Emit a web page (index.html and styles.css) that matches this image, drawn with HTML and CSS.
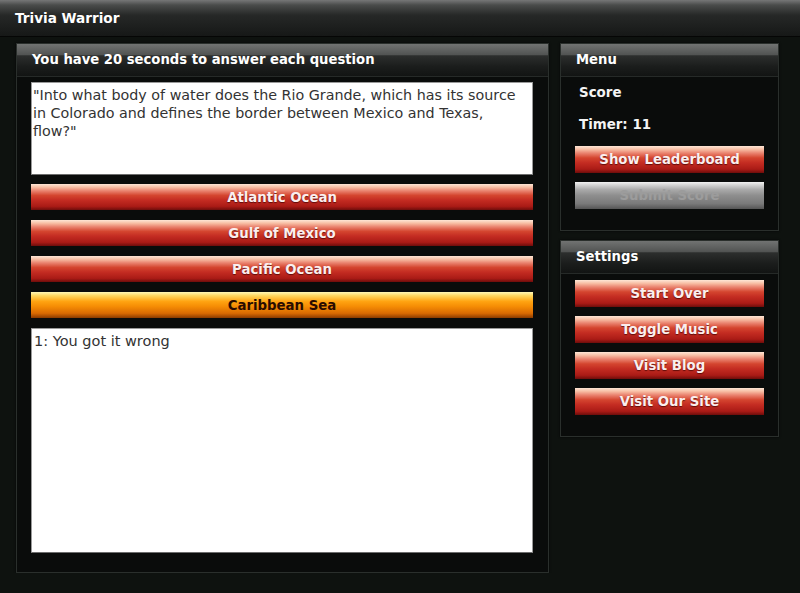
FILE: index.html
```html
<!DOCTYPE html>
<html lang="en">
<head>
  <meta charset="UTF-8">
  <meta name="viewport" content="width=device-width, initial-scale=1.0">
  <title>Trivia Warrior</title>
  <link rel="stylesheet" href="styles.css">
</head>
<body>
  <header class="topbar">Trivia Warrior</header>

  <main class="layout">
    <section class="panel game">
      <h2 class="panel-head">You have 20 seconds to answer each question</h2>
      <div class="panel-body game-body">
        <div class="question">"Into what body of water does the Rio Grande, which has its source in Colorado and defines the border between Mexico and Texas, flow?"</div>

        <div class="answers">
          <button class="btn btn-red answer">Atlantic Ocean</button>
          <button class="btn btn-red answer">Gulf of Mexico</button>
          <button class="btn btn-red answer">Pacific Ocean</button>
          <button class="btn btn-orange answer">Caribbean Sea</button>
        </div>

        <div class="log">1: You got it wrong</div>
      </div>
    </section>

    <aside class="sidebar">
      <section class="panel">
        <h2 class="panel-head">Menu</h2>
        <div class="panel-body side-body">
          <div class="stat">Score</div>
          <div class="stat">Timer: 11</div>
          <div class="btn-stack">
            <button class="btn btn-red">Show Leaderboard</button>
            <button class="btn btn-gray" disabled>Submit Score</button>
          </div>
        </div>
      </section>

      <section class="panel">
        <h2 class="panel-head">Settings</h2>
        <div class="panel-body side-body settings-body">
          <div class="btn-stack">
            <button class="btn btn-red">Start Over</button>
            <button class="btn btn-red">Toggle Music</button>
            <button class="btn btn-red">Visit Blog</button>
            <button class="btn btn-red">Visit Our Site</button>
          </div>
        </div>
      </section>
    </aside>
  </main>
</body>
</html>
```

FILE: styles.css
```css
body {
  margin: 0;
  padding: 0;
  background-color: #0e120f;
  font-family: "DejaVu Sans", Verdana, sans-serif;
  color: #fff;
}

/* top title bar */
.topbar {
  height: 36px;
  line-height: 36px;
  padding-left: 15px;
  font-size: 13.6px;
  font-weight: bold;
  border-bottom: 1px solid #050605;
  background: linear-gradient(#767777 0%, #4a4c4b 14%, #262827 42%, #161817 100%);
}

.layout {
  display: flex;
  align-items: flex-start;
  gap: 11px;
  padding: 6px 0 0 16px;
}

/* panels */
.panel {
  background-color: #0a0c0b;
  border: 1px solid #2a2f2c;
  box-shadow: 0 0 2px rgba(0, 0, 0, 0.8);
}

.panel-head {
  margin: 0;
  height: 33px;
  line-height: 32px;
  padding-left: 15px;
  font-size: 13.2px;
  font-weight: bold;
  color: #fff;
  box-sizing: border-box;
  border-bottom: 1px solid #262a28;
  background: linear-gradient(#717372 0%, #525453 33%, #2c2e2d 37%, #1b1d1c 70%, #121413 100%);
}

.game {
  width: 531px;
}

.game-body {
  padding: 5px 15px 19px 14px;
}

.question {
  height: 87px;
  padding: 3px 7px 1px 1px;
  background-color: #fff;
  border: 1px solid #9a9a9a;
  border-bottom-color: #6d6d6d;
  color: #333;
  font-size: 14.3px;
  line-height: 18px;
}

.answers {
  display: flex;
  flex-direction: column;
  gap: 10px;
  margin: 9px 0 10px;
}

.log {
  height: 219px;
  padding: 3px 2px 1px 2px;
  background-color: #fff;
  border: 1px solid #9a9a9a;
  border-bottom-color: #6d6d6d;
  color: #333;
  font-size: 14.5px;
  line-height: 18px;
}

/* buttons */
.btn {
  display: block;
  width: 100%;
  height: 26px;
  padding: 0;
  border: none;
  font-family: "DejaVu Sans", Verdana, sans-serif;
  font-size: 13.3px;
  font-weight: bold;
  cursor: pointer;
}

.btn-red {
  color: #fbeeee;
  text-shadow: 0 1px 1px rgba(60, 0, 0, 0.7);
  background: linear-gradient(#fde6d6 0%, #f8c0a6 12%, #ea8470 26%, #d4452f 44%, #c42c22 62%, #aa1b16 86%, #6e0d0b 100%);
}

.btn-orange {
  color: #2a0c00;
  background: linear-gradient(#fff8b8 0%, #ffd860 14%, #ffa412 36%, #f58c04 56%, #d86a02 82%, #8a3a00 100%);
}

.btn-gray {
  color: #9c9c9c;
  cursor: default;
  background: linear-gradient(#f2f2f2 0%, #d6d6d6 10%, #aaaaaa 28%, #8e8e8e 50%, #7a7a7a 80%, #555 100%);
}

.answer {
  height: 26px;
}

/* right column */
.sidebar {
  display: flex;
  flex-direction: column;
  gap: 9px;
  width: 219px;
}

.side-body {
  padding: 6px 14px 21px 14px;
}

.stat {
  height: 20px;
  line-height: 20px;
  padding-left: 4px;
  margin-bottom: 12px;
  font-size: 13.4px;
  font-weight: bold;
  color: #f4f4f4;
}

.btn-stack {
  display: flex;
  flex-direction: column;
  gap: 9px;
}

.btn-stack .btn {
  height: 27px;
}

.stat + .stat {
  margin-bottom: 11px;
}
```
